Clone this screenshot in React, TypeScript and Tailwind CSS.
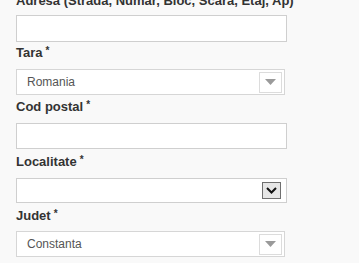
const font = { fontFamily: '"Liberation Sans", Arial, sans-serif' }

const Label = ({ text, required = true, className = '' }: { text: string; required?: boolean; className?: string }) => (
  <div className={`h-[15px] text-[13px] leading-[15px] font-bold text-[#333] whitespace-nowrap ${className}`}>
    {text}
    {required && <span className="ml-[3px] text-[10px] leading-[10px] align-[3px] font-bold">*</span>}
  </div>
)

const TextInput = ({ className = '' }: { className?: string }) => (
  <div className={`w-[271px] bg-white border border-[#cfcfcf] ${className}`} />
)

const FancySelect = ({ value, className = '' }: { value: string; className?: string }) => (
  <div className={`w-[269px] h-[26px] bg-white border border-[#d6d6d6] flex items-center justify-between pl-[10px] pr-[2px] ${className}`}>
    <span className="text-[12px] text-[#555]">{value}</span>
    <div className="w-[23px] h-[21px] border border-[#dcdcdc] bg-white flex items-center justify-center">
      <svg width="11" height="6" viewBox="0 0 11 6">
        <path d="M0 0 H11 L5.5 6 Z" fill="#9a9a9a" />
      </svg>
    </div>
  </div>
)

const NativeSelect = ({ className = '' }: { className?: string }) => (
  <div className={`w-[271px] h-[25px] bg-white border border-[#cfcfcf] flex items-center justify-end pr-[5px] ${className}`}>
    <div className="w-[19px] h-[17px] border border-[#6f6f6f] bg-[#e6e6e6] flex items-center justify-center">
      <svg width="11" height="7" viewBox="0 0 11 7">
        <path d="M1 1 L5.5 5.5 L10 1" stroke="#111" strokeWidth="2" fill="none" />
      </svg>
    </div>
  </div>
)

export default function App() {
  return (
    <div className="w-[359px] h-[263px] overflow-hidden bg-[#f9f9f9]" style={font}>
      <div className="flex flex-col pl-[16px]">
        <Label text="Adresa (Strada, Numar, Bloc, Scara, Etaj, Ap)" required={false} className="-mt-[7px]" />
        <TextInput className="mt-[7px] h-[27px]" />
        <Label text="Tara" className="mt-[3px]" />
        <FancySelect value="Romania" className="mt-[9px]" />
        <Label text="Cod postal" className="mt-[4px]" />
        <TextInput className="mt-[9px] h-[26px]" />
        <Label text="Localitate" className="mt-[5px]" />
        <NativeSelect className="mt-[9px]" />
        <Label text="Judet" className="mt-[5px]" />
        <FancySelect value="Constanta" className="mt-[8px]" />
      </div>
    </div>
  )
}
